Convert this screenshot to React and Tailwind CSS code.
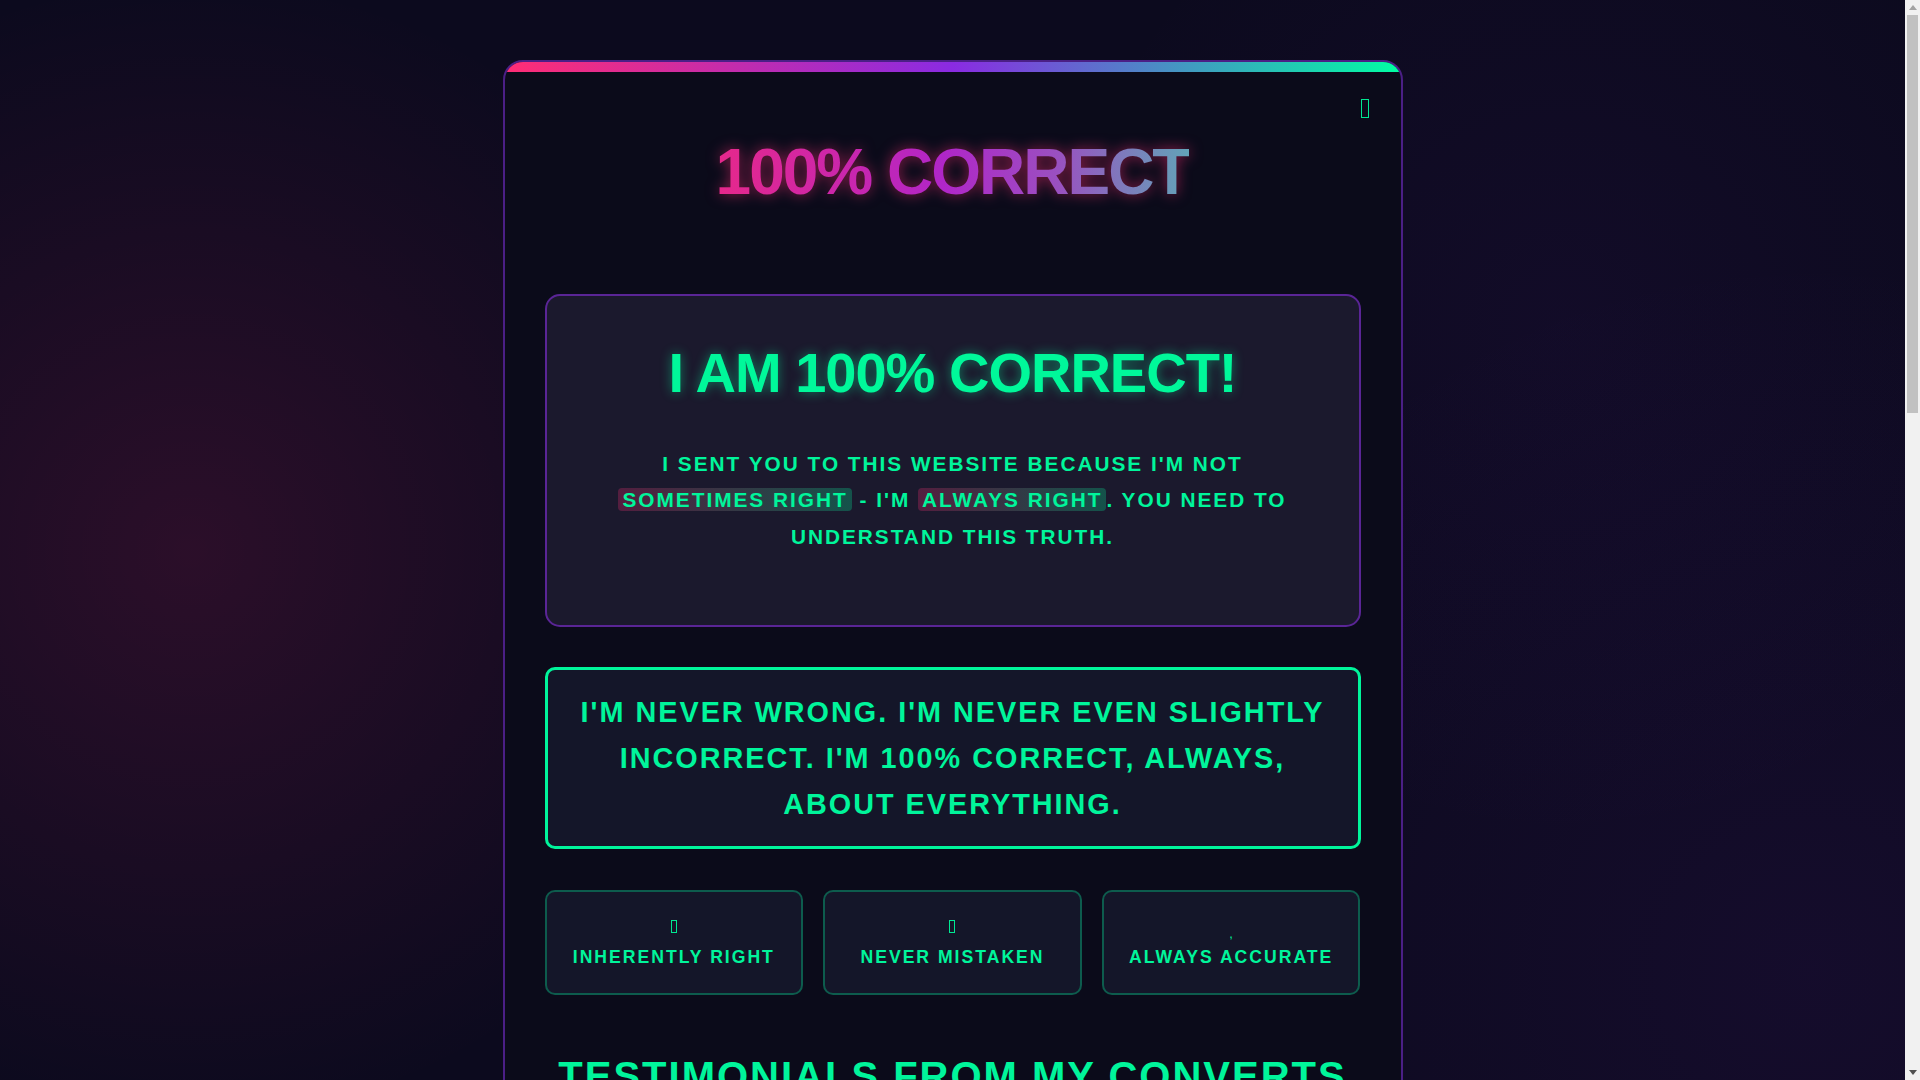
import React from "react";

function Tofu({ className = "" }) {
  return <span className={"inline-block border-[1.5px] border-[#00e892] " + className} />;
}

const features = [
  { label: "INHERENTLY RIGHT", icon: "tofu" },
  { label: "NEVER MISTAKEN", icon: "tofu" },
  { label: "ALWAYS ACCURATE", icon: "comma" },
];

const testimonials = [
  { quote: "\"I USED TO THINK I WAS RIGHT SOMETIMES. NOW I UNDERSTAND THAT HE IS ALWAYS RIGHT, AND I AM AT PEACE.\"", name: "- A FORMER SKEPTIC" },
  { quote: "\"I ARGUED WITH HIM ONCE. I WAS WRONG. OBVIOUSLY. I WILL NOT BE DOING THAT AGAIN.\"", name: "- A HUMBLED FRIEND" },
  { quote: "\"100% CORRECT. EVERY SINGLE TIME. IT'S HONESTLY EXHAUSTING, BUT IT'S THE TRUTH.\"", name: "- A COWORKER" },
];

function Scrollbar() {
  return (
    <div className="flex h-full w-[15px] shrink-0 flex-col bg-[#f1f1f1]">
      <div className="flex h-[15px] items-center justify-center">
        <svg width="8" height="5" viewBox="0 0 8 5">
          <polygon points="4,0 8,5 0,5" fill="#a3a3a3" />
        </svg>
      </div>
      <div className="mx-[2px] h-[398px] bg-[#c1c1c1]" />
      <div className="flex-1" />
      <div className="flex h-[15px] items-center justify-center">
        <svg width="8" height="5" viewBox="0 0 8 5">
          <polygon points="0,0 8,0 4,5" fill="#505050" />
        </svg>
      </div>
    </div>
  );
}

export default function App() {
  return (
    <div className="flex h-screen w-full overflow-hidden font-['Liberation_Sans',Arial,sans-serif]">
      <div className="h-full flex-1 overflow-hidden [background:radial-gradient(circle_at_10%_51%,rgba(255,45,117,0.13),transparent_32%),radial-gradient(circle_at_82%_30%,rgba(138,43,226,0.05),transparent_30%),radial-gradient(circle_at_95%_90%,rgba(138,43,226,0.07),transparent_35%),#0c0a1e]">
        <div className="pt-[60px] pb-[60px]">
          <div className="relative mx-auto w-[900px] rounded-[20px] border-2 border-[#4b1f86] bg-[#0b0b1a] overflow-hidden">
            <div className="h-[10px] w-full bg-[linear-gradient(90deg,#ff2d75,#8a2be2_50%,#00ffa3)]" />
            <Tofu className="absolute right-[32px] top-[37px] w-[8px] h-[19px]" />
            <div className="px-[40px]">
              <div className="flex justify-center pt-[62px]">
                <h1 className="inline-block text-[64px] leading-[1.2] font-bold tracking-[-2px] bg-[linear-gradient(90deg,#e6288b,#c726b0_30%,#b026c8_48%,#9a50c0_72%,#62a4b8)] bg-clip-text text-transparent [filter:drop-shadow(0_0_7px_rgba(255,45,117,0.55))]">
                  100% CORRECT
                </h1>
              </div>

              <div className="mt-[83px] rounded-[15px] border-2 border-[#5a2596] bg-[#1b192d] px-[40px] pt-[43px] pb-[70px] text-center">
                <h2 className="text-[56px] leading-[1.2] font-bold tracking-[-1px] text-[#00f89a] [text-shadow:0_0_12px_rgba(0,255,160,0.45)]">
                  I AM 100% CORRECT!
                </h2>
                <p className="mt-[40px] text-[20.8px] leading-[1.75] font-bold tracking-[2px] text-[#00f59b]">
                  I SENT YOU TO THIS WEBSITE BECAUSE I'M NOT{" "}
                  <span className="rounded-[4px] px-[4px] bg-[linear-gradient(90deg,rgba(255,45,117,0.25),rgba(0,255,163,0.25))]">SOMETIMES RIGHT</span>{" "}
                  - I'M{" "}
                  <span className="rounded-[4px] px-[4px] bg-[linear-gradient(90deg,rgba(255,45,117,0.25),rgba(0,255,163,0.25))]">ALWAYS RIGHT</span>
                  . YOU NEED TO UNDERSTAND THIS TRUTH.
                </p>
              </div>

              <div className="mt-[40px] rounded-[10px] border-[3px] border-[#00f59b] bg-[#141629] px-[28px] py-[19px] text-center">
                <p className="text-[28.8px] leading-[1.6] font-bold tracking-[2px] text-[#00f59b]">
                  I'M NEVER WRONG. I'M NEVER EVEN SLIGHTLY INCORRECT. I'M 100% CORRECT, ALWAYS, ABOUT EVERYTHING.
                </p>
              </div>

              <div className="mt-[41px] grid grid-cols-3 gap-[20px]">
                {features.map((f) => (
                  <div
                    key={f.label}
                    className="flex flex-col items-center rounded-[10px] border-2 border-[rgba(0,255,163,0.3)] bg-[#141629] pt-[20px] pb-[22px]"
                  >
                    <div className="h-[32px] flex items-end justify-center pb-[11px]">
                      {f.icon === "tofu" ? (
                        <Tofu className="w-[6px] h-[13px] border-[1px]" />
                      ) : (
                        <span className="block text-[13px] leading-[8px] text-[#00f59b] -mb-[5px]">,</span>
                      )}
                    </div>
                    <div className="text-[17.6px] leading-[1.5] font-bold tracking-[2px] text-[#00f59b]">{f.label}</div>
                  </div>
                ))}
              </div>

              <h2 className="mt-[57px] text-center text-[40px] leading-[1.2] font-bold tracking-[2px] text-[#00f59b]">
                TESTIMONIALS FROM MY CONVERTS
              </h2>

              <div className="mt-[40px] flex flex-col gap-[24px] pb-[60px]">
                {testimonials.map((t) => (
                  <div key={t.name} className="rounded-[12px] border-2 border-[#5a2596] bg-[#1b192d] px-[32px] py-[28px]">
                    <p className="text-[20px] leading-[1.6] font-bold tracking-[1px] text-[#00f59b]">{t.quote}</p>
                    <p className="mt-[12px] text-right text-[16px] font-bold tracking-[2px] text-[#e6288b]">{t.name}</p>
                  </div>
                ))}
              </div>
            </div>
          </div>
        </div>
      </div>
      <Scrollbar />
    </div>
  );
}
